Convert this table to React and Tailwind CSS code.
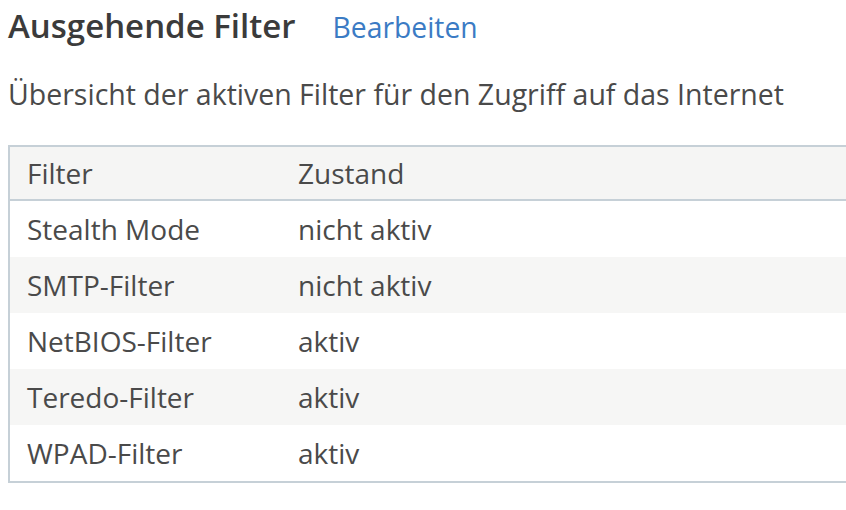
export default function App() {
  const rows = [
    ["Stealth Mode", "nicht aktiv"],
    ["SMTP-Filter", "nicht aktiv"],
    ["NetBIOS-Filter", "aktiv"],
    ["Teredo-Filter", "aktiv"],
    ["WPAD-Filter", "aktiv"],
  ];
  return (
    <div className="w-[846px] h-[510px] overflow-hidden bg-white text-[#4a4a4a]" style={{ fontFamily: '"Open Sans", sans-serif' }}>
      <div className="pl-2 pt-[4px] flex items-baseline h-[50px]">
        <h1 className="text-[33px] leading-[44px] font-semibold text-[#3b3b3b]">Ausgehende Filter</h1>
        <a className="ml-[37px] text-[28.3px] leading-[44px] text-[#3b7bc4]">Bearbeiten</a>
      </div>
      <p className="pl-2 mt-[26px] text-[28.5px] leading-[36px]">Übersicht der aktiven Filter für den Zugriff auf das Internet</p>
      <div className="ml-2 mt-[33px] w-[880px] border-2 border-[#c6d0d7] text-[28px]">
        <div className="flex h-[54px] items-center bg-[#f5f5f4] border-b-2 border-[#c6d0d7]">
          <div className="w-[288px] pl-[17px]">Filter</div>
          <div>Zustand</div>
        </div>
        {rows.map((r, i) => (
          <div key={i} className={"flex h-[56px] items-center " + (i % 2 === 1 ? "bg-[#f6f6f5]" : "bg-white")}>
            <div className="w-[288px] pl-[17px]">{r[0]}</div>
            <div>{r[1]}</div>
          </div>
        ))}
      </div>
    </div>
  );
}
